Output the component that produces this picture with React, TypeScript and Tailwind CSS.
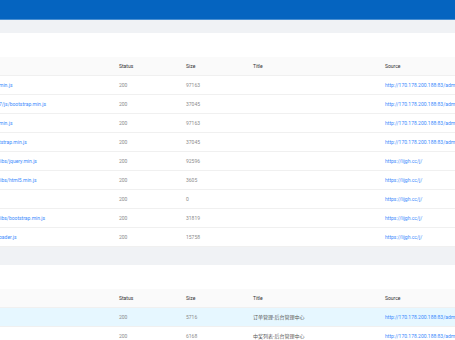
import React from "react";

type Row = { url: string; status: string; size: string; title: string; source: string };

const scripts: Row[] = [
  { url: "min.js", status: "200", size: "97163", title: "", source: "http://170.178.200.188:83/admin/" },
  { url: "7/js/bootstrap.min.js", status: "200", size: "37045", title: "", source: "http://170.178.200.188:83/admin/" },
  { url: "min.js", status: "200", size: "97163", title: "", source: "http://170.178.200.188:83/admin/" },
  { url: "tstrap.min.js", status: "200", size: "37045", title: "", source: "http://170.178.200.188:83/admin/" },
  { url: "libs/jquery.min.js", status: "200", size: "92596", title: "", source: "https://lijgh.cc/j/" },
  { url: "libs/html5.min.js", status: "200", size: "3605", title: "", source: "https://lijgh.cc/j/" },
  { url: "", status: "200", size: "0", title: "", source: "https://lijgh.cc/j/" },
  { url: "libs/bootstrap.min.js", status: "200", size: "31819", title: "", source: "https://lijgh.cc/j/" },
  { url: "oader.js", status: "200", size: "15758", title: "", source: "https://lijgh.cc/j/" },
];

const pages: Row[] = [
  { url: "", status: "200", size: "5716", title: "订单管理-后台管理中心", source: "http://170.178.200.188:83/admin/" },
  { url: "", status: "200", size: "6168", title: "中奖列表-后台管理中心", source: "http://170.178.200.188:83/admin/" },
];

const cols = "grid grid-cols-[119px_67px_67px_132px_1fr] items-center";

function Table({ rows, highlightFirst }: { rows: Row[]; highlightFirst?: boolean }) {
  return (
    <div className="bg-white">
      <div className="h-6" />
      <div className={`${cols} h-[19px] bg-[#fafafa] border-b border-[#f0f0f0] text-[#333]`}>
        <span />
        <span>Status</span>
        <span>Size</span>
        <span>Title</span>
        <span>Source</span>
      </div>
      {rows.map((r, i) => (
        <div
          key={i}
          className={`${cols} h-[19px] border-b border-[#f0f0f0] text-[#8c8c8c] ${
            highlightFirst && i === 0 ? "bg-[#e6f7ff]" : "bg-white"
          }`}
        >
          <span className="text-[#3d8bfd] -ml-px whitespace-nowrap">{r.url}</span>
          <span>{r.status}</span>
          <span>{r.size}</span>
          <span className="text-[#595959]">{r.title}</span>
          <span className="text-[#3d8bfd] whitespace-nowrap">{r.source}</span>
        </div>
      ))}
    </div>
  );
}

export default function App() {
  return (
    <div
      className="w-[455px] h-[340px] overflow-hidden bg-[#f0f2f5] text-[5px] leading-none"
      style={{ fontFamily: "Roboto, 'Noto Sans CJK SC', sans-serif" }}
    >
      {/* top bar */}
      <div className="h-[19px] bg-[#0564c0]" />
      <div className="h-px bg-[#4a8fd2]" />
      <div className="h-[13px]" />

      <Table rows={scripts} />

      <div className="h-[18px]" />

      <Table rows={pages} highlightFirst />
    </div>
  );
}
